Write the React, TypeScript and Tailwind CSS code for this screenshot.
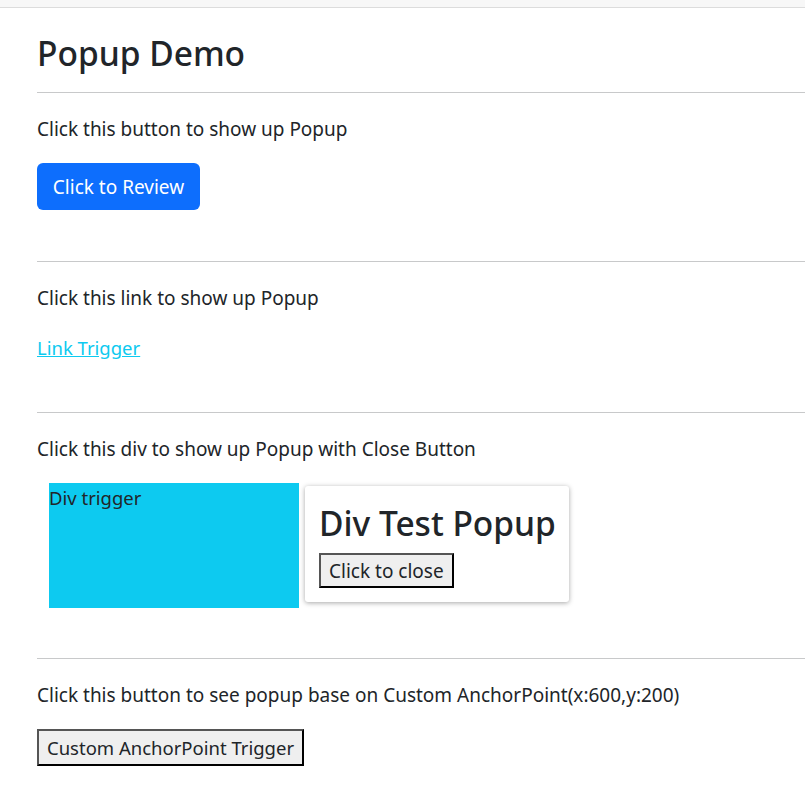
import React from "react";

const font = { fontFamily: '"Noto Sans", "Open Sans", sans-serif' };

function Hr() {
  return <div className="h-px bg-[#c8c9ca] w-[800px]" />;
}

export default function App() {
  return (
    <div className="min-h-[785px] w-[805px] overflow-hidden bg-white text-[#212529] text-[19px] leading-[28px]" style={font}>
      <div className="h-[8px] bg-[#f7f7f7] border-b border-[#dcdcdc]" />
      <div className="pl-[37px]">
        <h1 className="mt-[25px] h-[41px] text-[33.5px] leading-[41px] font-medium">Popup Demo</h1>
        <div className="mt-[18px]"><Hr /></div>
        <p className="mt-[22px]">Click this button to show up Popup</p>
        <button className="mt-[20px] h-[47px] w-[163px] rounded-[6px] bg-[#0d6efd] text-white text-[19px]">Click to Review</button>
        <div className="mt-[51px]"><Hr /></div>
        <p className="mt-[22px]">Click this link to show up Popup</p>
        <p className="mt-[22px]">
          <a href="#" className="text-[#0dcaf0] underline text-[18.5px]">Link Trigger</a>
        </p>
        <div className="mt-[50px]"><Hr /></div>
        <p className="mt-[22px]">Click this div to show up Popup with Close Button</p>
        <div className="relative mt-[20px] ml-[12px] w-[250px] h-[125px] bg-[#0dcaf0] text-[18.5px] leading-[28px] pt-[1px]">
          Div trigger
          <div className="absolute left-[256px] top-[3px] w-[264px] h-[116px] bg-white rounded-[3px] shadow-[0_1px_5px_rgba(0,0,0,0.35)] px-[14px] pt-[15px] whitespace-nowrap">
            <div className="text-[33.5px] leading-[44px] font-medium text-[#212529]">Div Test Popup</div>
            <button className="mt-[8px] h-[35px] px-[8px] bg-[#efefef] border-2 border-t-[#555] border-l-[#555] border-b-black border-r-black text-[19px] leading-[28px] text-[#212529]">Click to close</button>
          </div>
        </div>
        <div className="mt-[50px]"><Hr /></div>
        <p className="mt-[22px]">Click this button to see popup base on Custom AnchorPoint(x:600,y:200)</p>
        <button className="mt-[20px] h-[37px] w-[267px] bg-[#efefef] border-2 border-t-[#555] border-l-[#555] border-b-black border-r-black text-[18.5px] leading-[28px] text-[#212529] whitespace-nowrap">Custom AnchorPoint Trigger</button>
      </div>
    </div>
  );
}
